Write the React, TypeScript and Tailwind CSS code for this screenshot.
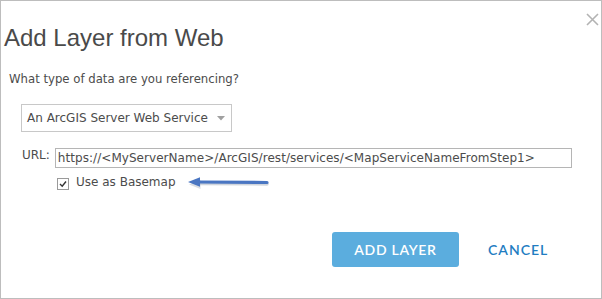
import React from "react";

export default function App() {
  const body = { fontFamily: '"DejaVu Sans", Verdana, sans-serif' } as React.CSSProperties;
  return (
    <div className="w-[602px] h-[299px] bg-white">
      <div className="relative w-[602px] h-[299px] border border-[#bdbdbd] bg-white flex flex-col text-[#4c4c4c]">
        <svg className="absolute left-[585px] top-[12px]" width="13" height="13" viewBox="0 0 13 13">
          <path d="M1 1 L12 12 M12 1 L1 12" stroke="#b3b3b3" strokeWidth="1.6" fill="none" />
        </svg>

        <div
          className="mt-[23px] ml-[3px] text-[24px] leading-[28px] text-[#4a4a4a]"
          style={{ fontFamily: '"Liberation Sans", Arial, sans-serif' }}
        >
          Add Layer from Web
        </div>

        <div className="mt-[19px] ml-[8px] text-[11.7px] leading-[16px]" style={body}>
          What type of data are you referencing?
        </div>

        <div
          className="mt-[17px] ml-[20px] w-[211px] h-[28px] border border-[#c8c8c8] flex items-center justify-between pl-[5px] pr-[6px] text-[12px] leading-[16px]"
          style={body}
        >
          <span>An ArcGIS Server Web Service</span>
          <svg width="8" height="5" viewBox="0 0 8 5">
            <path d="M0 0 L8 0 L4 4.5 Z" fill="#a0a0a0" />
          </svg>
        </div>

        <div className="mt-[16px] flex items-start text-[12px] leading-[16px]" style={body}>
          <span className="ml-[21px] mt-[-1px]">URL:</span>
          <div className="ml-[5px] w-[517px] h-[20px] border border-[#b5b5b5] pl-[2px] pt-[1px] whitespace-nowrap overflow-hidden tracking-[0.05px]">
            {"https://<MyServerName>/ArcGIS/rest/services/<MapServiceNameFromStep1>"}
          </div>
        </div>

        <div className="relative mt-[6px] ml-[56px] flex items-center h-[16px] text-[12px] leading-[16px]" style={body}>
          <div className="mt-[3px] w-[12px] h-[12px] border border-[#9a9a9a] bg-white flex items-center justify-center">
            <svg width="8" height="8" viewBox="0 0 8 8">
              <path d="M1 4 L3.2 6.2 L7 1.5" stroke="#333" strokeWidth="1.4" fill="none" />
            </svg>
          </div>
          <span className="ml-[7px]">Use as Basemap</span>
          <svg
            className="absolute left-[130px] top-[0px]"
            width="84"
            height="18"
            viewBox="0 0 84 18"
          >
            <path d="M12 9.5 L80 10" stroke="#aab3c0" strokeWidth="3.4" strokeLinecap="round" fill="none" opacity="0.55" />
            <path d="M1.5 9 L13 4.5 L13 13.5 Z" fill="#aab3c0" opacity="0.45" transform="translate(0.5,1.5)" />
            <path d="M11 8 L80 8.5" stroke="#4a76c2" strokeWidth="3.2" strokeLinecap="round" fill="none" />
            <path d="M1 8 L13 3.2 L13 12.8 Z" fill="#4a76c2" />
          </svg>
        </div>

        <div className="mt-[42px] flex items-center">
          <button
            className="ml-[331px] w-[127px] h-[35px] rounded-[3px] bg-[#5badde] text-white text-[14px] tracking-[0.7px] font-semibold"
            style={{ fontFamily: 'Lato, "Open Sans", sans-serif' }}
          >
            ADD LAYER
          </button>
          <span
            className="ml-[29px] text-[14px] tracking-[1px] font-semibold text-[#1f7dc2]"
            style={{ fontFamily: 'Lato, "Open Sans", sans-serif' }}
          >
            CANCEL
          </span>
        </div>
      </div>
    </div>
  );
}
